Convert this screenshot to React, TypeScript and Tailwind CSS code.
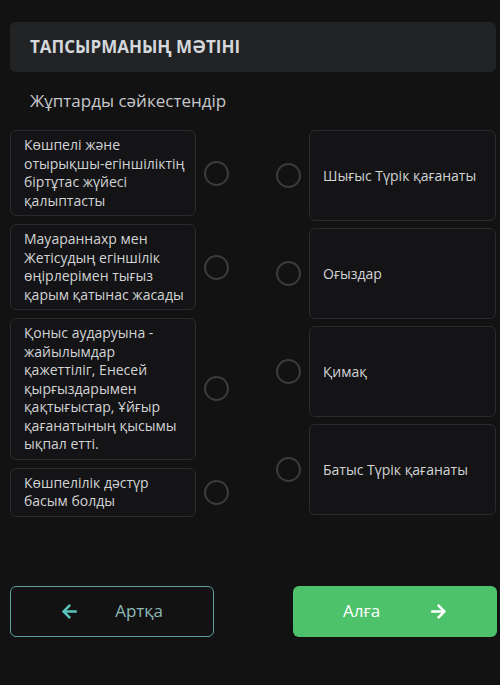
import { FaArrowLeft, FaArrowRight } from "react-icons/fa";

const leftItems = [
  "Көшпелі және отырықшы-егіншіліктің біртұтас жүйесі қалыптасты",
  "Мауараннахр мен Жетісудың егіншілік өңірлерімен тығыз қарым қатынас жасады",
  "Қоныс аударуына - жайылымдар қажеттіліг, Енесей қырғыздарымен қақтығыстар, Ұйғыр қағанатының қысымы ықпал етті.",
  "Көшпелілік дәстүр басым болды",
];

const rightItems = ["Шығыс Түрік қағанаты", "Оғыздар", "Қимақ", "Батыс Түрік қағанаты"];

function Dot() {
  return <div className="w-[25px] h-[25px] shrink-0 rounded-full border-2 border-[#3a3b3d]" />;
}

export default function App() {
  return (
    <div
      className="w-[500px] h-[685px] bg-[#121213] text-[#d2d3d5] overflow-hidden"
      style={{ fontFamily: '"Open Sans", "Noto Sans", sans-serif' }}
    >
      <div className="pt-[22px] pl-[10px] pr-[4px]">
        <div className="h-[50px] rounded-md bg-[#222325] flex items-center px-5">
          <span className="text-[17px] font-bold text-[#d4d7dc]">ТАПСЫРМАНЫҢ МӘТІНІ</span>
        </div>
      </div>

      <div className="pl-[30px] h-[58px] flex items-center text-[17px] text-[#c6c7c9]">
        Жұптарды сәйкестендір
      </div>

      <div className="flex pl-[10px] pr-[4px]">
        <div className="flex flex-col gap-2">
          {leftItems.map((t) => (
            <div key={t} className="flex items-center">
              <div className="w-[186px] rounded-md border border-[#2a2b2e] bg-[#141416] pl-[13px] pr-[8px] pt-[5px] pb-[5px] text-[14px] leading-[18.5px]">
                {t}
              </div>
              <div className="ml-[8px]">
                <Dot />
              </div>
            </div>
          ))}
        </div>

        <div className="flex flex-col gap-[7px] ml-[47px] flex-1">
          {rightItems.map((t) => (
            <div key={t} className="flex items-center h-[91px]">
              <Dot />
              <div className="ml-[8px] flex-1 h-full rounded-md border border-[#2a2b2e] bg-[#141416] flex items-center pl-[13px] text-[14px]">
                {t}
              </div>
            </div>
          ))}
        </div>
      </div>

      <div className="flex justify-between pl-[10px] pr-[3px] mt-[69px]">
        <button className="w-[204px] h-[51px] rounded-md border border-[#5f9e99] flex items-center justify-between px-[50px] text-[17px] text-[#8db9b6]">
          <FaArrowLeft className="text-[#5cc4bd] text-[17px]" />
          <span>Артқа</span>
        </button>
        <button className="w-[204px] h-[51px] rounded-md bg-[#4dc26a] flex items-center justify-between px-[50px] text-[17px] text-white">
          <span>Алға</span>
          <FaArrowRight className="text-white text-[17px]" />
        </button>
      </div>
    </div>
  );
}
